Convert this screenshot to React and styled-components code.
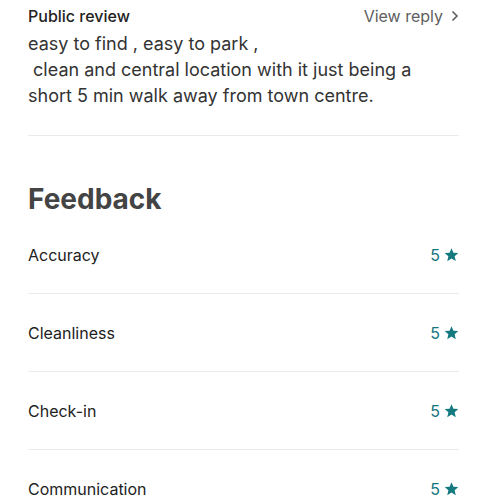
import React from "react";
import styled, { createGlobalStyle } from "styled-components";

const GlobalStyle = createGlobalStyle`
  body {
    margin: 0;
    background: #ffffff;
    font-family: "Inter", "Open Sans", sans-serif;
    -webkit-font-smoothing: antialiased;
  }
`;

const Page = styled.div`
  display: flex;
  flex-direction: column;
  padding: 0 28px;
  width: 431px;
`;

const ReviewHeader = styled.div`
  display: flex;
  justify-content: space-between;
  align-items: center;
  margin-top: 6px;
  height: 20px;
`;

const Label = styled.div`
  font-size: 16px;
  font-weight: 500;
  color: #222222;
`;

const ViewReply = styled.div`
  display: flex;
  align-items: center;
  gap: 7px;
  font-size: 16px;
  color: #5e5e5e;
`;

const Body = styled.p`
  margin: 5px 0 0;
  font-size: 18px;
  line-height: 26px;
  color: #333333;
  white-space: pre-wrap;
`;

const Divider = styled.hr`
  border: none;
  border-top: 1px solid #ebebeb;
  margin: ${(p) => p.$top || 0}px 0 0;
  width: 100%;
`;

const Heading = styled.h2`
  margin: 46px 0 0;
  font-size: 28px;
  font-weight: 700;
  color: #444444;
  line-height: 34px;
`;

const Row = styled.div`
  display: flex;
  justify-content: space-between;
  align-items: center;
  height: 77px;
`;

const RowLabel = styled.div`
  font-size: 16px;
  color: #222222;
`;

const Score = styled.div`
  display: flex;
  align-items: center;
  gap: 4px;
  font-size: 16px;
  color: #16747c;
`;

const Star = () => (
  <svg width="15" height="15" viewBox="0 0 24 24" fill="#147a80">
    <path d="M12 1.8l3.1 7.2 7.8.7-5.9 5.2 1.8 7.7L12 18.5l-6.8 4.1 1.8-7.7-5.9-5.2 7.8-.7z" />
  </svg>
);

const Chevron = () => (
  <svg width="9" height="12" viewBox="0 0 9 12" fill="none">
    <path d="M2.5 1.5L7 6l-4.5 4.5" stroke="#5e5e5e" strokeWidth="1.6" />
  </svg>
);

const ratings = ["Accuracy", "Cleanliness", "Check-in", "Communication"];

const App = () => (
  <>
    <GlobalStyle />
    <Page>
      <ReviewHeader>
        <Label>Public review</Label>
        <ViewReply>
          View reply <Chevron />
        </ViewReply>
      </ReviewHeader>
      <Body>
        {"easy to find , easy to park ,\n clean and central location with it just being a short 5 min walk away from town centre."}
      </Body>
      <Divider $top={26} />
      <Heading>Feedback</Heading>
      {ratings.map((r, i) => (
        <React.Fragment key={r}>
          {i > 0 && <Divider />}
          <Row>
            <RowLabel>{r}</RowLabel>
            <Score>
              5 <Star />
            </Score>
          </Row>
        </React.Fragment>
      ))}
    </Page>
  </>
);

export default App;
